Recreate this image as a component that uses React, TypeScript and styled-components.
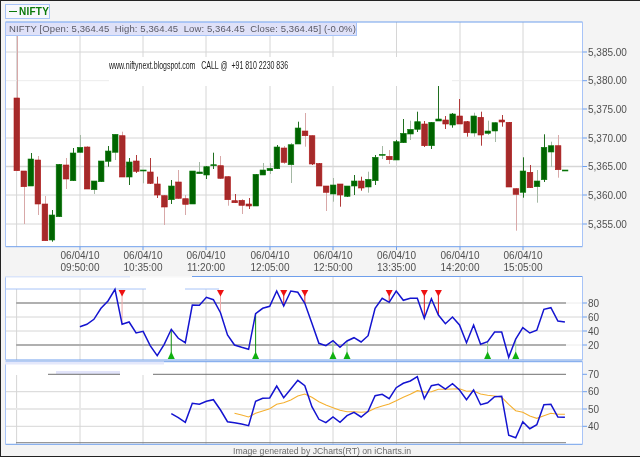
import React from 'react';
import styled, { createGlobalStyle } from 'styled-components';

const GlobalStyle = createGlobalStyle`
  html, body {
    margin: 0;
    padding: 0;
    background: #f4f4f4;
  }
`;

const BLUE = '#6f9fec';
const PALE_BLUE = '#a8c4f8';
const GRID = '#d6d6d6';
const GRID_X = [16.6, 80, 143, 206, 270, 333, 396.5, 460, 523];

const candleX = (i: number) => 16.6 + 7.03 * i;

// c, wick top, body top, body bottom, wick bottom (page pixels)
const candles: [string, number, number, number, number][] = [
  ['r', 30, 98, 170.7, 171], ['r', 171, 171, 186.7, 224], ['g', 153, 159, 186, 186], ['r', 156, 160, 204, 215],
  ['r', 196, 204, 240.7, 241], ['g', 210, 215, 240, 241.7], ['g', 164, 164.3, 216.7, 217], ['r', 158, 165, 179, 189],
  ['g', 148, 153, 180.7, 181], ['g', 135, 147.3, 152.3, 153], ['r', 146, 147, 189, 189], ['g', 181, 181, 189.7, 194],
  ['g', 161, 161, 181.7, 182], ['g', 146, 151, 161.3, 166.7], ['g', 134, 134.3, 152.3, 160], ['r', 131.7, 135.7, 177, 177],
  ['g', 158, 162, 177, 185], ['r', 155, 161, 171.3, 173], ['g', 170, 170, 171, 183.3], ['r', 158, 172, 183.3, 184],
  ['r', 176.7, 184, 195, 198], ['r', 195, 195.7, 207, 225], ['g', 180, 186, 199.7, 204], ['r', 170, 182, 198.3, 199],
  ['r', 195, 198.7, 204.3, 215], ['g', 171, 171, 204, 204], ['g', 162, 172, 173.7, 174], ['g', 166, 166.7, 175, 179],
  ['g', 152.7, 164.7, 165.7, 169], ['r', 156, 165.7, 178.3, 179], ['r', 176, 176.7, 199.7, 205.7], ['r', 194, 200.7, 202.7, 203],
  ['r', 199, 200.3, 205.3, 214], ['r', 198, 204, 206, 209], ['g', 174, 174.3, 206, 206], ['g', 163, 170, 175, 175],
  ['g', 163, 168.3, 170.7, 174], ['g', 145, 147, 168.7, 169], ['r', 146, 148, 162.3, 164], ['g', 143, 144.7, 164.7, 183],
  ['g', 121.7, 128, 144, 144], ['r', 113, 131, 135.7, 146.7], ['r', 135.7, 135.7, 164, 165], ['r', 163, 163.5, 186, 186],
  ['r', 186, 186, 192.3, 211], ['g', 178, 185, 194, 201.7], ['r', 184, 184, 195, 206.7], ['g', 186, 186, 196.3, 197],
  ['g', 175, 181, 186, 195], ['r', 176.7, 181, 188, 190.7], ['g', 171.7, 179.3, 187, 192.7], ['g', 155, 157.3, 180.7, 185],
  ['g', 146, 154.3, 155, 159], ['r', 150, 156.3, 159.7, 164], ['g', 140, 141.7, 160, 160], ['g', 119, 133.3, 142.7, 143],
  ['g', 120.7, 129.3, 134, 140], ['g', 111.7, 121.7, 129.3, 132], ['r', 121, 124, 145.7, 147], ['g', 122, 122.3, 145.7, 149],
  ['g', 86, 119, 121, 121], ['r', 116, 120, 124, 129], ['g', 113, 114, 125, 127.7], ['r', 99, 116, 124, 124],
  ['r', 121, 121.7, 132.7, 136.7], ['g', 112.7, 116, 133, 136.7], ['r', 111.7, 117.3, 135, 145.7], ['g', 120.7, 131, 133.3, 135],
  ['g', 122, 122.7, 131, 142], ['r', 115, 120, 122, 126.7], ['r', 122, 122.3, 187, 187], ['r', 188, 188.7, 194.3, 230.7],
  ['g', 157.3, 171, 192.3, 197.7], ['r', 165, 172.3, 187.7, 188], ['g', 170, 181, 186.7, 202.7], ['g', 134.3, 147.3, 179.7, 182],
  ['g', 141.7, 145.7, 152, 166.7], ['r', 135, 145.7, 169.7, 177.7], ['g', 170, 170, 170.8, 171],
];

const paleWicks = new Set([
  0, 1, 3, 4, 7, 9, 10, 11, 14, 15, 18, 21, 23, 24, 26, 29, 30, 32, 35, 36, 38, 39, 41, 44, 45, 50, 52, 53, 56, 65, 67, 68, 71, 74, 76, 77,
]);

// traced from the 3x view, first point is candle 9
const rsiLine = [
  155, 148, 133, 100, 78, 43, 148, 141, 174, 169, 212, 242, 208, 163, 190, 203, 90, 91, 67, 74, 113, 180, 210, 217, 223, 116, 100, 94, 48, 93,
  48, 52, 85, 145, 205, 212, 197, 217, 198, 188, 201, 182, 100, 70, 82, 48, 76, 70, 70, 130, 71, 120, 146, 126, 150, 203, 150, 208, 200, 171,
  171, 247, 192, 158, 174, 166, 103, 98, 138, 141,
].map((v) => 275 + v / 3);

// first point is candle 22
const stochLine = [
  161, 173, 187, 130, 133, 124, 119, 150, 185, 188, 192, 197, 124, 115, 114, 78, 113, 87, 61, 77, 140, 178, 188, 171, 187, 167, 157, 171, 154,
  107, 103, 116, 83, 70, 63, 50, 116, 77, 73, 87, 71, 90, 119, 90, 134, 128, 110, 109, 226, 233, 185, 206, 194, 134, 133, 171, 172,
].map((v) => 360 + v / 3);

// first point is candle 31
const avgLine = [
  160, 165, 171, 160, 153, 146, 133, 128, 120, 108, 102, 112, 125, 135, 143, 151, 155, 155, 157, 155, 145, 138, 132, 122, 112, 103, 92, 96, 95,
  88, 88, 87, 86, 94, 93, 102, 106, 108, 112, 133, 152, 157, 168, 175, 167, 160, 163, 163,
].map((v) => 360 + v / 3);

const toPoints = (ys: number[], start: number) => ys.map((y, i) => `${candleX(start + i).toFixed(1)},${y.toFixed(1)}`).join(' ');

const priceLabels: [string, number][] = [
  ['5,385.00', 52], ['5,380.00', 80.7], ['5,375.00', 109], ['5,370.00', 138], ['5,365.00', 166.5], ['5,360.00', 195], ['5,355.00', 224],
];

const timeLabels: [number, string][] = [
  [80, '09:50:00'], [143, '10:35:00'], [206, '11:20:00'], [270, '12:05:00'], [333, '12:50:00'], [396.5, '13:35:00'], [460, '14:20:00'], [523, '15:05:00'],
];

const sellSignals: [number, string][] = [[15, '#f0a8a8'], [29, '#f0a8a8'], [38, '#e03030'], [41, '#e03030'], [53, '#e03030'], [58, '#e81818'], [60, '#e81818']];
const buySignals: [number, string][] = [[22, '#109010'], [34, '#109010'], [45, '#90c890'], [47, '#90c890'], [67, '#90c890'], [71, '#a0d8a0']];

const Page = styled.div`
  box-sizing: border-box;
  width: 640px;
  height: 457px;
  padding: 3px 0 0 4px;
  overflow: hidden;
  display: flex;
  flex-direction: column;
  background: #f4f4f4;
  border-top: 1px solid #222;
  border-left: 1px solid #222;
  border-bottom: 1px solid #222;
  font-family: 'Liberation Sans', Arial, sans-serif;
  filter: blur(0.3px);
`;

const Legend = styled.div`
  box-sizing: border-box;
  width: 45px;
  height: 15px;
  margin-bottom: 2px;
  padding-left: 3px;
  display: flex;
  align-items: center;
  gap: 2px;
  border: 1px solid ${PALE_BLUE};
  background: #f8f8fc;
  color: #0a7a0a;
  font-size: 10px;
  font-weight: bold;
  letter-spacing: 0.2px;
`;

const LegendLine = styled.span`
  width: 9px;
  height: 1px;
  background: #0a7a0a;
`;

const ChartBox = styled.div`
  position: relative;
  flex: none;
`;

const ChartSvg = styled.svg`
  display: block;
`;

const AxisText = styled.text`
  font-family: 'Liberation Sans', Arial, sans-serif;
  font-size: 10px;
  fill: #505050;
`;

const QuoteBar = styled.div`
  position: absolute;
  left: 0;
  top: 1px;
  box-sizing: border-box;
  width: 352px;
  height: 14px;
  padding-left: 3px;
  border: 1px solid ${PALE_BLUE};
  background: #dfe1f8;
  color: #5a5a66;
  font-size: 9.5px;
  line-height: 12px;
  letter-spacing: 0.11px;
  white-space: pre;
`;

const Watermark = styled.div`
  position: absolute;
  left: 104px;
  top: 36px;
  width: 343px;
  height: 29px;
  background: #fff;
`;

const WatermarkText = styled.span`
  position: absolute;
  left: 0;
  top: 3px;
  color: #222;
  font-size: 10px;
  line-height: 12px;
  white-space: pre;
  transform: scaleX(0.7);
  transform-origin: left center;
`;

const Footer = styled.div`
  height: 10px;
  padding-left: 228px;
  color: #6a6a6a;
  font-size: 8.7px;
  line-height: 10px;
  white-space: pre;
`;

const VerticalGrid = ({ from, to }: { from: number; to: number }) => (
  <>
    {GRID_X.map((x) => (
      <line key={x} x1={x} x2={x} y1={from} y2={to} stroke={GRID} />
    ))}
  </>
);

const Frame = ({ x0, y0, x1, y1 }: { x0: number; y0: number; x1: number; y1: number }) => (
  <>
    <line x1={x0} x2={x1} y1={y0} y2={y0} stroke={BLUE} />
    <line x1={x0} x2={x1} y1={y1} y2={y1} stroke={BLUE} />
    <line x1={x1} x2={x1} y1={y0} y2={y1} stroke={PALE_BLUE} />
    <line x1={x0} x2={x0} y1={y0} y2={y1} stroke={PALE_BLUE} />
  </>
);

const ValueLabel = ({ y, text }: { y: number; text: string }) => (
  <>
    <line x1={582.5} x2={587} y1={y} y2={y} stroke={BLUE} />
    <AxisText x={588} y={y + 3.5}>
      {text}
    </AxisText>
  </>
);

const Candle = ({ index }: { index: number }) => {
  const [kind, wickTop, top, bottom, wickBottom] = candles[index];
  const x = candleX(index);
  const up = kind === 'g';
  const pale = paleWicks.has(index);
  const wickColor = up ? (pale ? '#a4b8a4' : '#1f6f1f') : pale ? '#d8a8a8' : '#b03a3a';
  const wickX = Math.round(x) + 0.5;
  return (
    <>
      <line x1={wickX} x2={wickX} y1={wickTop} y2={wickBottom} stroke={wickColor} />
      <rect
        x={x - 2.6}
        y={top}
        width={5.6}
        height={Math.max(bottom - top, 1)}
        fill={up ? '#006400' : '#a52a2a'}
        stroke={up ? '#0c7a0c' : '#b01818'}
        strokeWidth={0.6}
      />
    </>
  );
};

const PriceChart = () => (
  <ChartBox>
    <ChartSvg width={635} height={255} viewBox="5 21 635 255">
      <rect x={5} y={22} width={577.5} height={224.7} fill="#fff" />
      <VerticalGrid from={22} to={246.7} />
      {priceLabels.map(([, y], i) => (
        <line key={y} x1={5} x2={582} y1={y} y2={y} stroke={i === 1 ? '#ececec' : GRID} strokeWidth={i === 4 ? 1.4 : 1} />
      ))}
      {candles.map((_, i) => (
        <Candle key={i} index={i} />
      ))}
      <Frame x0={5.5} y0={22} x1={582.5} y1={246.7} />
      {priceLabels.map(([text, y]) => (
        <ValueLabel key={text} y={y} text={text} />
      ))}
      {timeLabels.map(([x, time]) => (
        <React.Fragment key={time}>
          <line x1={x} x2={x} y1={246.7} y2={250} stroke={BLUE} />
          <AxisText x={x} y={258.5} textAnchor="middle">
            06/04/10
          </AxisText>
          <AxisText x={x} y={271} textAnchor="middle">
            {time}
          </AxisText>
        </React.Fragment>
      ))}
    </ChartSvg>
    <QuoteBar>NIFTY [Open: 5,364.45  High: 5,364.45  Low: 5,364.45  Close: 5,364.45] (-0.0%)</QuoteBar>
    <Watermark>
      <WatermarkText>www.niftynext.blogspot.com   CALL @  +91 810 2230 836</WatermarkText>
    </Watermark>
  </ChartBox>
);

const RsiChart = () => (
  <ChartSvg width={635} height={85} viewBox="5 276 635 85">
    <rect x={5} y={276.5} width={577.5} height={83.5} fill="#fff" />
    <VerticalGrid from={276.5} to={360} />
    {[317, 331].map((y) => (
      <line key={y} x1={5} x2={582} y1={y} y2={y} stroke={GRID} />
    ))}
    {[303, 345].map((y) => (
      <React.Fragment key={y}>
        <line x1={566} x2={582} y1={y} y2={y} stroke="#ececec" />
        <line x1={16} x2={566} y1={y} y2={y} stroke="#b0b0b0" strokeWidth={2} />
      </React.Fragment>
    ))}
    <rect x={5} y={277} width={214} height={12} fill="#fff" />
    <Frame x0={5.5} y0={276.5} x1={582.5} y1={360} />
    <line x1={130} x2={192} y1={276.5} y2={276.5} stroke="#f8f8f8" strokeWidth={2} />
    <line x1={5} x2={130} y1={276.5} y2={276.5} stroke="#dbe5fa" strokeWidth={2} />
    <line x1={5} x2={146} y1={289} y2={289} stroke={PALE_BLUE} />
    <line x1={185} x2={219} y1={289} y2={289} stroke={PALE_BLUE} />
    {sellSignals.map(([i, color]) => {
      const x = candleX(i);
      const y = rsiLine[i - 9];
      return (
        <React.Fragment key={i}>
          <line x1={x} x2={x} y1={295} y2={y} stroke={color} />
          <polygon points={`${x - 3.5},290 ${x + 3.5},290 ${x},296.5`} fill="#ee1111" />
        </React.Fragment>
      );
    })}
    {buySignals.map(([i, color]) => {
      const x = candleX(i);
      const y = rsiLine[i - 9];
      return (
        <React.Fragment key={i}>
          <line x1={x} x2={x} y1={y} y2={353} stroke={color} />
          <polygon points={`${x - 3.5},359 ${x + 3.5},359 ${x},351.5`} fill="#10b010" />
        </React.Fragment>
      );
    })}
    <polyline points={toPoints(rsiLine, 9)} fill="none" stroke="#1414d0" strokeWidth={1.5} />
    <ValueLabel y={303} text="80" />
    <ValueLabel y={317} text="60" />
    <ValueLabel y={331} text="40" />
    <ValueLabel y={345} text="20" />
  </ChartSvg>
);

const StochChart = () => (
  <ChartSvg width={635} height={85} viewBox="5 361 635 85">
    <rect x={5} y={361.7} width={577.5} height={82.6} fill="#fff" />
    <VerticalGrid from={361.7} to={444.3} />
    {[391.7, 426.3].map((y) => (
      <line key={y} x1={5} x2={582} y1={y} y2={y} stroke={GRID} />
    ))}
    <line x1={5} x2={582} y1={409} y2={409} stroke="#e8e8e8" strokeWidth={2} />
    <rect x={5} y={362} width={159} height={13} fill="#fff" />
    <rect x={56} y={371} width={64} height={3} fill="#e2e4fa" />
    <line x1={48} x2={120} y1={374.3} y2={374.3} stroke="#707070" />
    <line x1={153} x2={566} y1={374.3} y2={374.3} stroke="#707070" />
    <line x1={16} x2={566} y1={442.7} y2={442.7} stroke="#808080" />
    <Frame x0={5.5} y0={361.7} x1={582.5} y1={444.3} />
    <line x1={5} x2={164} y1={363} y2={363} stroke="#e4e8fb" strokeWidth={3} />
    <polyline points={toPoints(avgLine, 31)} fill="none" stroke="#f5b030" strokeWidth={1.1} />
    <polyline points={toPoints(stochLine, 22)} fill="none" stroke="#1414d0" strokeWidth={1.5} />
    <ValueLabel y={374.3} text="70" />
    <ValueLabel y={391.7} text="60" />
    <ValueLabel y={409} text="50" />
    <ValueLabel y={426.3} text="40" />
  </ChartSvg>
);

const App = () => (
  <>
    <GlobalStyle />
    <Page>
      <Legend>
        <LegendLine />
        NIFTY
      </Legend>
      <PriceChart />
      <RsiChart />
      <StochChart />
      <Footer>Image generated by JCharts(RT) on iCharts.in</Footer>
    </Page>
  </>
);

export default App;
